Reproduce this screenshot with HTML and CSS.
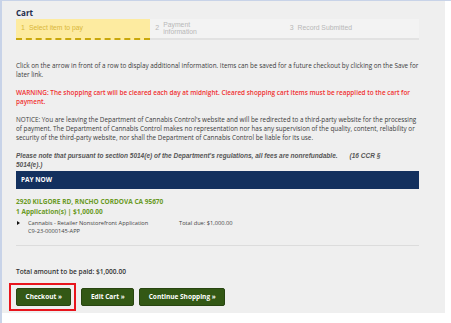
FILE: index.html
```html
<!DOCTYPE html>
<html lang="en">
<head>
    <meta charset="UTF-8">
    <meta name="viewport" content="width=device-width, initial-scale=1.0">
    <title>Cart</title>
    <link rel="stylesheet" href="styles.css">
</head>
<body>
    <div class="page">
        <div class="cart-panel">
            <h1 class="cart-title">Cart</h1>

            <!-- Step indicator -->
            <div class="steps">
                <div class="step step-active">
                    <span class="step-num">1</span>
                    <span class="step-label">Select item to pay</span>
                </div>
                <div class="step">
                    <span class="step-num">2</span>
                    <span class="step-label">Payment<br>information</span>
                </div>
                <div class="step">
                    <span class="step-num">3</span>
                    <span class="step-label">Record Submitted</span>
                </div>
            </div>

            <p class="info-text">
                Click on the arrow in front of a row to display additional information. Items can be saved for a future checkout by clicking on the Save for later link.
            </p>
            <p class="info-text warning">
                WARNING: The shopping cart will be cleared each day at midnight. Cleared shopping cart items must be reapplied to the cart for payment.
            </p>
            <p class="info-text">
                NOTICE: You are leaving the Department of Cannabis Control's website and will be redirected to a third-party website for the processing of payment. The Department of Cannabis Control makes no representation nor has any supervision of the quality, content, reliability or security of the third-party website, nor shall the Department of Cannabis Control be liable for its use.
            </p>
            <p class="info-text fee-note">
                Please note that pursuant to section 5014(e) of the Department's regulations, all fees are nonrefundable.<span class="cite">(16 CCR §<br>5014(e).)</span>
            </p>

            <div class="pay-header">PAY NOW</div>

            <div class="cart-group">
                <div class="group-address">2920 KILGORE RD, RNCHO CORDOVA CA 95670</div>
                <div class="group-summary">1 Application(s) | $1,000.00</div>
                <div class="cart-row">
                    <span class="row-arrow"></span>
                    <div class="row-name">
                        <div>Cannabis - Retailer Nonstorefront Application</div>
                        <div>C9-23-0000145-APP</div>
                    </div>
                    <div class="row-total">Total due: $1,000.00</div>
                </div>
            </div>

            <div class="total-line">Total amount to be paid: $1,000.00</div>

            <div class="actions">
                <span class="highlight">
                    <a href="#" class="btn">Checkout &raquo;</a>
                </span>
                <a href="#" class="btn">Edit Cart &raquo;</a>
                <a href="#" class="btn">Continue Shopping &raquo;</a>
            </div>
        </div>
    </div>
</body>
</html>
```

FILE: styles.css
```css
* {
    margin: 0;
    padding: 0;
    box-sizing: border-box;
}

body {
    font-family: 'Open Sans', 'Noto Sans', sans-serif;
    background: white;
    color: #333;
}

.page {
    border-top: 1px solid #c8d3e8;
    border-left: 2px solid #c8d3e8;
    min-height: 323px;
}

.cart-panel {
    width: 443px;
    background: #efefef;
    padding: 6px 26px 6px 14px;
}

.cart-title {
    font-family: 'Open Sans', sans-serif;
    font-size: 8px;
    font-weight: 700;
    color: #1c2a4a;
    height: 12px;
    line-height: 12px;
}

.steps {
    display: flex;
    height: 21px;
    margin-bottom: 21px;
    font-family: 'Liberation Sans', Arial, sans-serif;
    font-size: 6.8px;
    color: #b8b8b8;
}

.step {
    flex: 1;
    display: flex;
    align-items: center;
    gap: 4px;
    padding-left: 5px;
    background: #f3f3f3;
    border-bottom: 2px solid #e2e2e2;
    line-height: 6.8px;
}

.step-active {
    background: #fdeba0;
    border-bottom: 2px dashed #c9a70a;
    color: #d9b73a;
}

.step-num {
    font-size: 7px;
}

.info-text {
    font-size: 6.35px;
    line-height: 9.2px;
    color: #3b3b3b;
    margin-bottom: 8.5px;
}

.warning {
    color: #ef2f2f;
    font-weight: 600;
    font-size: 6.4px;
}

.fee-note {
    font-family: 'Liberation Sans', Arial, sans-serif;
    font-style: italic;
    font-weight: 700;
    font-size: 6.5px;
    color: #555;
    margin-bottom: 2px;
}

.cite {
    margin-left: 12px;
}

.pay-header {
    background: #13305e;
    color: white;
    font-size: 6.5px;
    font-weight: 700;
    height: 18px;
    line-height: 18px;
    padding-left: 5px;
    margin-bottom: 8px;
}

.cart-group {
    padding-bottom: 10px;
    border-bottom: 1px solid #dcdcdc;
    margin-bottom: 21px;
}

.group-address,
.group-summary {
    color: #6a9a25;
    font-size: 6.5px;
    font-weight: 700;
    line-height: 10px;
}

.cart-row {
    display: flex;
    font-size: 5.7px;
    line-height: 8px;
    color: #444;
    margin-top: 2px;
}

.row-arrow {
    width: 0;
    height: 0;
    margin: 2px 8px 0 1px;
    border-top: 2.5px solid transparent;
    border-bottom: 2.5px solid transparent;
    border-left: 3px solid #111;
}

.row-name {
    width: 151px;
}

.total-line {
    font-size: 6.6px;
    font-weight: 600;
    color: #333;
    line-height: 10px;
    margin-bottom: 10px;
}

.actions {
    display: flex;
    align-items: center;
    gap: 5px;
}

.highlight {
    display: inline-flex;
    padding: 3px;
    margin: -4px 0 -4px -7px;
    border: 2px solid #e8141c;
    padding-left: 5px;
}

.btn {
    display: inline-block;
    background: #335815;
    border: 1px solid #284511;
    border-radius: 2px;
    color: white;
    font-size: 6.5px;
    font-weight: 700;
    text-decoration: none;
    height: 18px;
    line-height: 16px;
    padding: 0 8.5px;
}
```
